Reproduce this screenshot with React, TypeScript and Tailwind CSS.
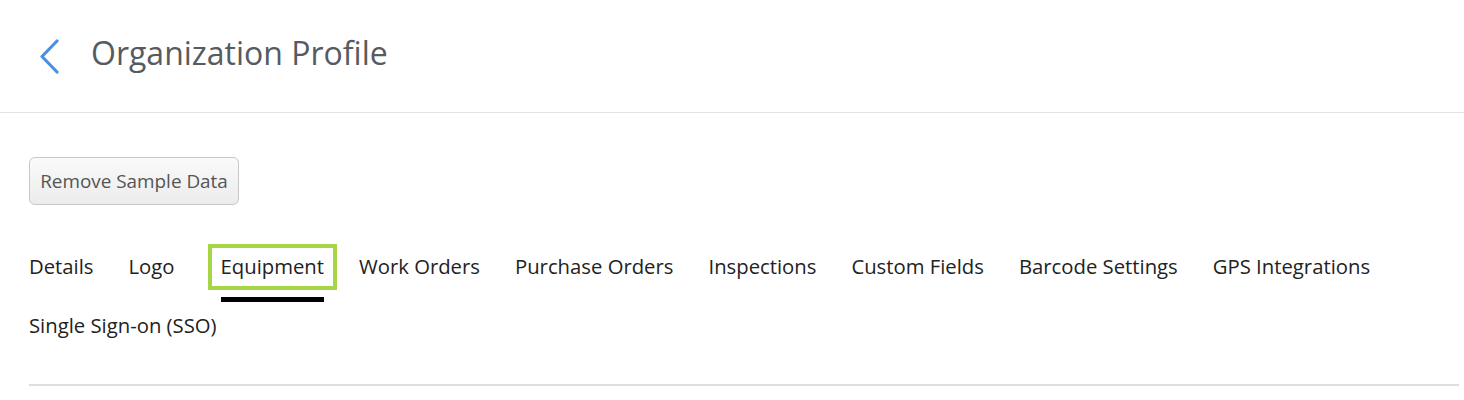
import React from 'react';

const tabs = [
    'Details',
    'Logo',
    'Equipment',
    'Work Orders',
    'Purchase Orders',
    'Inspections',
    'Custom Fields',
    'Barcode Settings',
    'GPS Integrations',
    'Single Sign-on (SSO)',
];

export default function App() {
    const active = 'Equipment';

    return (
        <div className="min-h-screen bg-white text-[#333] font-['Open_Sans',sans-serif]">
            <header className="h-[113px] flex items-center border-b border-[#e3e3e3] pl-[39px]">
                <button className="flex items-center justify-center w-[20px] h-[35px] mr-[32px]">
                    <svg width="20" height="35" viewBox="0 0 20 35" fill="none">
                        <path d="M18 2L3 17.5L18 33" stroke="#4a90e2" strokeWidth="3.2" strokeLinecap="round" strokeLinejoin="round" />
                    </svg>
                </button>
                <h1 className="text-[32px] text-[#555b60] leading-none -mt-[6px]">Organization Profile</h1>
            </header>

            <div className="pl-[29px] pr-[5px] pt-[44px]">
                <button className="h-[48px] w-[210px] rounded-[6px] border border-[#c8c8c8] bg-gradient-to-b from-[#fafafa] to-[#ececec] text-[18.9px] text-[#555] leading-none">
                    Remove Sample Data
                </button>

                <nav className="mt-[39px] flex flex-wrap border-b-2 border-[#dedede] pb-[22px]">
                    {tabs.map(tab => (
                        <div
                            key={tab}
                            className={`relative mr-[35px] h-[59px] flex flex-col ${tab === active ? 'ml-[11px]' : ''}`}
                        >
                            <span className="text-[20.3px] leading-[45px] text-[#222]">{tab}</span>
                            {tab === active && (
                                <>
                                    <span className="absolute -left-[13px] -right-[13px] top-0 h-[46px] border-4 border-[#a7d645]" />
                                    <span className="mt-[8px] h-[5px] bg-black" />
                                </>
                            )}
                        </div>
                    ))}
                </nav>
            </div>
        </div>
    );
}
